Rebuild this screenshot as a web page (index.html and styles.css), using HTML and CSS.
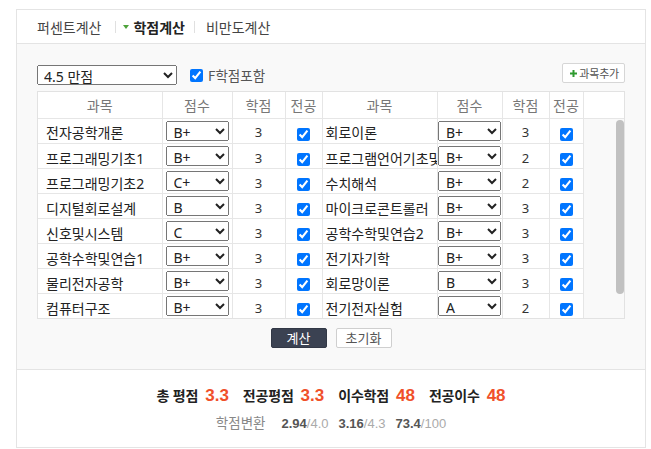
FILE: index.html
```html
<!DOCTYPE html>
<html lang="ko">
<head>
<meta charset="utf-8">
<title>학점계산</title>
<link rel="stylesheet" href="styles.css">
</head>
<body>
<div class="calc">
  <nav class="tabs">
    <a class="tab">퍼센트계산</a>
    <span class="sep"></span>
    <a class="tab active"><span class="caret"></span>학점계산</a>
    <span class="sep"></span>
    <a class="tab last">비만도계산</a>
  </nav>

  <section class="panel">
    <div class="toolbar">
      <select class="scale"><option>4.5 만점</option><option>4.3 만점</option><option>4.0 만점</option></select>
      <label class="fopt"><input type="checkbox" checked>F학점포함</label>
      <button class="add" type="button"><svg class="plus" width="7" height="7" viewBox="0 0 7 7"><path d="M2.5 0h2v2.5H7v2H4.5V7h-2V4.5H0v-2h2.5z" fill="#2f9a2f"/></svg>과목추가</button>
    </div>

    <div class="grid">
      <table class="head">
        <colgroup><col class="c1"><col class="c2"><col class="c3"><col class="c4"><col class="c5"><col class="c6"><col class="c7"><col class="c8"><col class="c9"></colgroup>
        <tr><th>과목</th><th>점수</th><th>학점</th><th>전공</th><th>과목</th><th>점수</th><th>학점</th><th>전공</th><th class="blank"></th></tr>
      </table>
      <div class="body">
        <table class="rows">
          <colgroup><col class="c1"><col class="c2"><col class="c3"><col class="c4"><col class="c5"><col class="c6"><col class="c7"><col class="c8"></colgroup>
          <tr>
            <td class="subj"><input value="전자공학개론"></td><td class="grade"><select><option>B+</option></select></td><td class="cr">3</td><td class="maj"><input type="checkbox" checked></td>
            <td class="subj r"><input value="회로이론"></td><td class="grade"><select><option>B+</option></select></td><td class="cr">3</td><td class="maj"><input type="checkbox" checked></td>
          </tr>
          <tr>
            <td class="subj"><input value="프로그래밍기초1"></td><td class="grade"><select><option>B+</option></select></td><td class="cr">3</td><td class="maj"><input type="checkbox" checked></td>
            <td class="subj r"><input value="프로그램언어기초및실습"></td><td class="grade"><select><option>B+</option></select></td><td class="cr">2</td><td class="maj"><input type="checkbox" checked></td>
          </tr>
          <tr>
            <td class="subj"><input value="프로그래밍기초2"></td><td class="grade"><select><option>C+</option></select></td><td class="cr">3</td><td class="maj"><input type="checkbox" checked></td>
            <td class="subj r"><input value="수치해석"></td><td class="grade"><select><option>B+</option></select></td><td class="cr">2</td><td class="maj"><input type="checkbox" checked></td>
          </tr>
          <tr>
            <td class="subj"><input value="디지털회로설계"></td><td class="grade"><select><option>B</option></select></td><td class="cr">3</td><td class="maj"><input type="checkbox" checked></td>
            <td class="subj r"><input value="마이크로콘트롤러"></td><td class="grade"><select><option>B+</option></select></td><td class="cr">3</td><td class="maj"><input type="checkbox" checked></td>
          </tr>
          <tr>
            <td class="subj"><input value="신호및시스템"></td><td class="grade"><select><option>C</option></select></td><td class="cr">3</td><td class="maj"><input type="checkbox" checked></td>
            <td class="subj r"><input value="공학수학및연습2"></td><td class="grade"><select><option>B+</option></select></td><td class="cr">3</td><td class="maj"><input type="checkbox" checked></td>
          </tr>
          <tr>
            <td class="subj"><input value="공학수학및연습1"></td><td class="grade"><select><option>B+</option></select></td><td class="cr">3</td><td class="maj"><input type="checkbox" checked></td>
            <td class="subj r"><input value="전기자기학"></td><td class="grade"><select><option>B+</option></select></td><td class="cr">3</td><td class="maj"><input type="checkbox" checked></td>
          </tr>
          <tr>
            <td class="subj"><input value="물리전자공학"></td><td class="grade"><select><option>B+</option></select></td><td class="cr">3</td><td class="maj"><input type="checkbox" checked></td>
            <td class="subj r"><input value="회로망이론"></td><td class="grade"><select><option>B</option></select></td><td class="cr">3</td><td class="maj"><input type="checkbox" checked></td>
          </tr>
          <tr>
            <td class="subj"><input value="컴퓨터구조"></td><td class="grade"><select><option>B+</option></select></td><td class="cr">3</td><td class="maj"><input type="checkbox" checked></td>
            <td class="subj r"><input value="전기전자실험"></td><td class="grade"><select><option>A</option></select></td><td class="cr">2</td><td class="maj"><input type="checkbox" checked></td>
          </tr>
        </table>
        <div class="rail"><span class="thumb"></span></div>
      </div>
    </div>

    <div class="actions">
      <button class="run" type="button">계산</button>
      <button class="reset" type="button">초기화</button>
    </div>
  </section>

  <section class="result">
    <div class="sum">
      <span class="stat">총 평점<em>3.3</em></span>
      <span class="stat">전공평점<em>3.3</em></span>
      <span class="stat">이수학점<em>48</em></span>
      <span class="stat">전공이수<em>48</em></span>
    </div>
    <div class="conv">
      <span class="lbl">학점변환</span>
      <span class="num"><b>2.94</b>/4.0</span>
      <span class="num"><b>3.16</b>/4.3</span>
      <span class="num"><b>73.4</b>/100</span>
    </div>
  </section>
</div>
</body>
</html>
```

FILE: styles.css
```css
* { box-sizing: border-box; }

body {
  margin: 0;
  padding: 9px 0 0 16px;
  background: #fff;
  font-family: "Noto Sans", "Noto Sans CJK KR", sans-serif;
  color: #333;
}

.calc {
  width: 630px;
  border: 1px solid #e4e4e4;
}

/* tabs */
.tabs {
  display: flex;
  align-items: center;
  height: 34px;
  padding-left: 20px;
  border-bottom: 1px solid #e4e4e4;
  background: #fff;
  font-family: "Noto Sans CJK KR", sans-serif;
  font-size: 14px;
  line-height: 16px;
}
.tab { color: #444; }
.tab.active { color: #222; font-weight: bold; display: flex; align-items: center; }
.sep { width: 1px; height: 12px; background: #e0e0e0; margin: 0 14px; }
.sep + .tab.active { margin-left: -7px; margin-right: -5px; }
.tab.last { margin-left: -3px; }
.caret {
  width: 0; height: 0;
  border-top: 4px solid #4ea33b;
  border-left: 3px solid transparent;
  border-right: 3px solid transparent;
  margin-right: 4px;
}

/* panel */
.panel {
  background: #f9f9f9;
  padding: 19px 20px 21px;
  border-bottom: 1px solid #e4e4e4;
}
.toolbar {
  display: flex;
  align-items: flex-start;
  height: 22px;
}
.scale {
  margin: 2px 0 0;
  width: 140px;
  height: 20px;
  font-family: "Noto Sans", "Noto Sans CJK KR", sans-serif;
  font-size: 14px;
  color: #222;
  padding: 0 0 0 2px;
}
.fopt {
  display: flex;
  align-items: center;
  height: 22px;
  margin: 1px 0 0 13px;
  font-family: "Noto Sans CJK KR", sans-serif;
  font-size: 13.5px;
  color: #555;
}
.fopt input { margin: 0 5px 0 0; width: 13px; height: 13px; }
.add {
  margin-left: auto;
  display: flex;
  align-items: center;
  gap: 2px;
  height: 20px;
  padding: 0 5px 0 7px;
  background: #fff;
  border: 1px solid #d6d6d6;
  border-radius: 2px;
  font-family: "Noto Sans CJK KR", sans-serif;
  font-size: 11px;
  letter-spacing: -0.2px;
  color: #555;
}

/* grid */
.grid {
  margin-top: 6px;
  width: 588px;
  border: 1px solid #e2e2e2;
}
table {
  border-collapse: collapse;
  table-layout: fixed;
}
.head { width: 586px; background: #fff; }
.rows { width: 545px; flex: none; background: #fff; }
.c1 { width: 124px; } .c2 { width: 70px; } .c3 { width: 53px; } .c4 { width: 37px; }
.c5 { width: 115px; } .c6 { width: 65px; } .c7 { width: 47px; } .c8 { width: 34px; } .c9 { width: 41px; }

th {
  height: 26px;
  padding: 0;
  border-right: 1px solid #e6e6e6;
  border-bottom: 1px solid #e6e6e6;
  font-family: "Noto Sans CJK KR", sans-serif;
  font-weight: normal;
  font-size: 14px;
  color: #777;
  text-align: center;
}
th.blank { border-right: 0; }

.body {
  display: flex;
  height: 199px;
  overflow: hidden;
}
.rail {
  flex: 1;
  display: flex;
  justify-content: flex-end;
  padding-top: 1px;
}
.thumb {
  width: 8px;
  height: 174px;
  background: #c1c1c1;
  border-radius: 4px;
}

td {
  height: 25px;
  padding: 0;
  border-right: 1px solid #e6e6e6;
  border-bottom: 1px solid #e6e6e6;
  vertical-align: middle;
  text-align: center;
  font-size: 13px;
  color: #333;
}
td.subj { text-align: left; padding-top: 3px; }
td.subj input {
  display: block;
  width: 100%;
  height: 20px;
  border: 0;
  padding: 0 0 0 8px;
  background: transparent;
  font-family: "Noto Sans", "Noto Sans CJK KR", sans-serif;
  font-size: 14px;
  color: #222;
  outline: none;
}
td.subj.r input { padding-left: 3px; }
td.grade select {
  display: block;
  margin: 0 auto;
  width: 63px;
  height: 20px;
  padding: 0 0 0 3px;
  font-family: "Noto Sans", sans-serif;
  font-size: 14px;
  color: #222;
}
td.cr { padding-top: 3px; }
td.maj { padding-top: 4px; }
td.maj input { margin: 0; width: 13px; height: 13px; vertical-align: middle; }

/* actions */
.actions {
  display: flex;
  justify-content: center;
  gap: 9px;
  margin-top: 9px;
}
.actions button {
  width: 56px;
  height: 20px;
  padding: 0;
  border-radius: 2px;
  font-family: "Noto Sans CJK KR", sans-serif;
  font-size: 13px;
  line-height: 18px;
}
.run { background: #3b4252; border: 1px solid #323846; color: #fff; }
.reset { background: #fff; border: 1px solid #cfcfcf; color: #555; }

/* result */
.result {
  background: #fff;
  padding: 15px 0 16px;
  font-family: "Noto Sans CJK KR", sans-serif;
}
.sum {
  display: flex;
  justify-content: center;
  gap: 14px;
  height: 20px;
  line-height: 20px;
  font-size: 14px;
  letter-spacing: -0.2px;
  font-weight: bold;
  color: #222;
}
.stat { display: flex; align-items: baseline; gap: 7px; }
.stat em {
  font-style: normal;
  font-family: "Liberation Sans", Arial, sans-serif;
  font-size: 17px;
  letter-spacing: 0;
  color: #f0502a;
}
.conv {
  display: flex;
  justify-content: center;
  align-items: baseline;
  gap: 10px;
  margin-top: 8px;
  height: 18px;
  line-height: 18px;
  font-size: 13.5px;
  color: #888;
}
.conv .lbl { margin-right: 6px; }
.conv .num {
  font-family: "Liberation Sans", Arial, sans-serif;
  font-size: 13px;
  color: #aaa;
}
.conv .num b { color: #555; }
```
